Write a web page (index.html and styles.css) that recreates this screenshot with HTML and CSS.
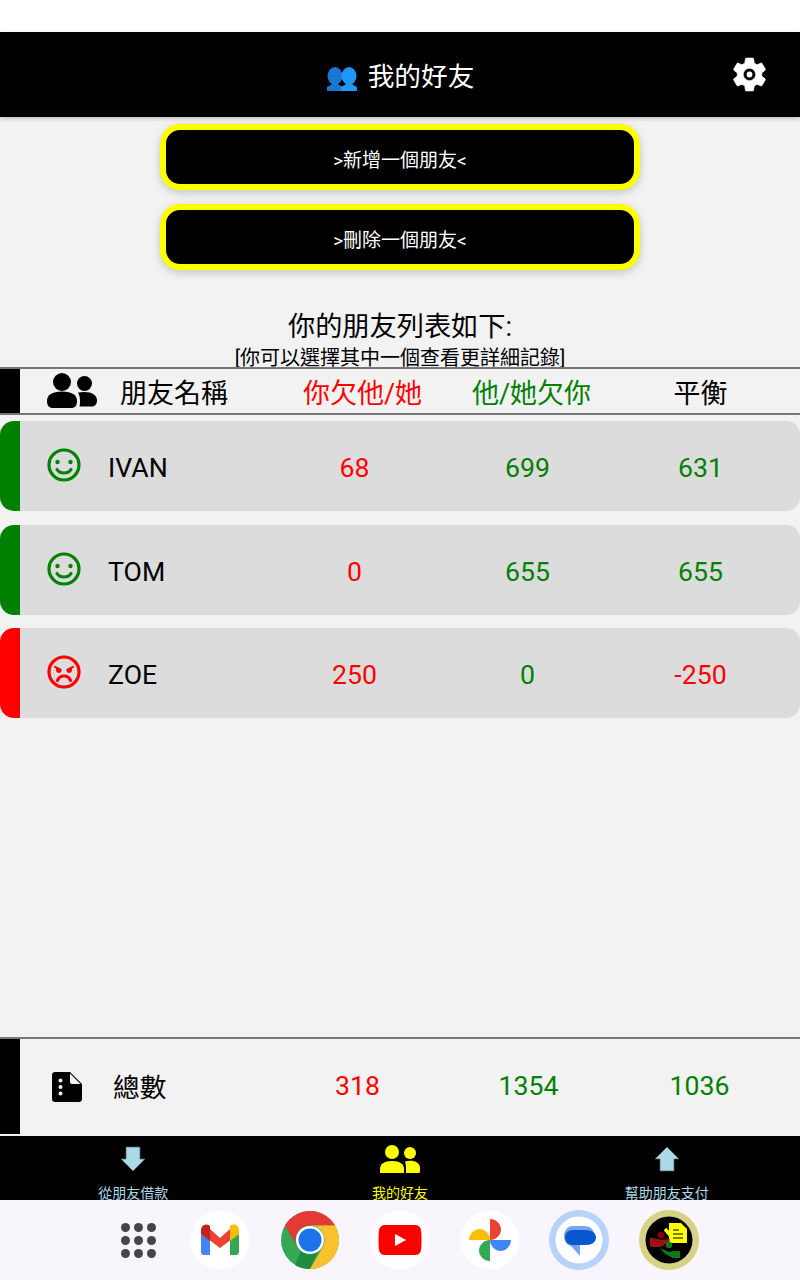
FILE: index.html
```html
<!DOCTYPE html>
<html lang="zh-Hant">
  <head>
    <meta charset="UTF-8" />
    <meta name="viewport" content="width=device-width, initial-scale=1.0" />
    <title>我的好友</title>
    <link rel="stylesheet" href="styles.css">
  </head>
  <body>
    <div class="status-bar"></div>

    <div class="top-bar">
      <div class="top-title">
        <svg class="title-icon" viewBox="0 0 30 24">
          <ellipse fill="#1976d2" cx="8" cy="9" rx="7.500" ry="9" />
          <path fill="#1976d2" d="M0 20c2-1 4-2 5-3h6c1 1 3 2 5 3v4H0z" />
          <ellipse fill="#2196f3" cx="22" cy="9" rx="7.500" ry="9" />
          <path fill="#2196f3" d="M14 20c2-1 4-2 5-3h6c1 1 3 2 5 3v4H14z" />
        </svg>
        <span>我的好友</span>
      </div>
      <svg class="settings-icon" viewBox="0 0 24 24">
        <path fill="#fff" stroke="#fff" stroke-width=".4" stroke-linejoin="round" d="M19.140 12.940c.04-.3.06-.61.06-.94 0-.32-.02-.64-.07-.94l2.030-1.580c.18-.14.23-.41.12-.61l-1.920-3.320c-.12-.22-.37-.29-.59-.22l-2.390.96c-.5-.38-1.030-.7-1.620-.94l-.36-2.540c-.04-.24-.24-.41-.48-.41h-3.840c-.24 0-.43.17-.47.41l-.36 2.540c-.59.24-1.130.57-1.620.94l-2.390-.96c-.22-.08-.47 0-.59.22L2.740 8.870c-.12.21-.08.47.12.61l2.030 1.580c-.05.3-.09.63-.09.94s.02.64.07.94l-2.030 1.580c-.18.14-.23.41-.12.61l1.920 3.320c.12.22.37.29.59.22l2.390-.96c.5.38 1.030.7 1.620.94l.36 2.540c.05.24.24.41.48.41h3.840c.24 0 .44-.17.47-.41l.36-2.540c.59-.24 1.130-.56 1.620-.94l2.390.96c.22.08.47 0 .59-.22l1.920-3.320c.12-.22.07-.47-.12-.61l-2.010-1.580zM12 15.600c-1.980 0-3.600-1.620-3.600-3.600s1.620-3.600 3.600-3.600 3.600 1.620 3.600 3.600-1.620 3.600-3.600 3.600z" />
        <circle fill="#fff" cx="12" cy="12" r="1.700" />
      </svg>
    </div>

    <div class="content">
      <div class="action-buttons">
        <button class="action-button">&gt;新增一個朋友&lt;</button>
        <button class="action-button">&gt;刪除一個朋友&lt;</button>
      </div>

      <div class="list-title">
        <h1>你的朋友列表如下:</h1>
        <p>[你可以選擇其中一個查看更詳細記錄]</p>
      </div>

      <div class="table-head">
        <div class="side-block"></div>
        <svg class="people-icon" viewBox="0 0 50 35">
          <circle cx="15" cy="9" r="9" />
          <path d="M0 28c0-6 5-9.500 15-9.500s15 3.500 15 9.500c0 4.500-2 7-6 7H6c-4 0-6-2.500-6-7z" />
          <circle cx="37.500" cy="10.500" r="7.500" />
          <path d="M31 19.500c2-.3 4-.5 6.500-.5 7.500 0 12.500 3 12.500 8.500 0 3.500-2 6-5 6H32.500c.5-2 .5-3.500.5-5.500 0-3-.5-6-2-8.500z" />
        </svg>
        <div class="head-name">朋友名稱</div>
        <div class="head-values">
          <span class="text-red">你欠他/她</span>
          <span class="text-green">他/她欠你</span>
          <span>平衡</span>
        </div>
      </div>

      <div class="friend-list">
        <div class="friend-row friend-good">
          <svg class="face-icon" viewBox="0 0 34 34">
            <circle class="face-line" cx="17" cy="17" r="15" />
            <circle class="face-dot" cx="10.500" cy="14" r="2.200" />
            <circle class="face-dot" cx="23.500" cy="14" r="2.200" />
            <path class="face-line" d="M10 21.500c1.500 2.500 4 3.500 7 3.500s5.500-1 7-3.500" />
          </svg>
          <div class="friend-name">IVAN</div>
          <div class="text-red">68</div>
          <div class="text-green">699</div>
          <div class="text-green">631</div>
        </div>
        <div class="friend-row friend-good">
          <svg class="face-icon" viewBox="0 0 34 34">
            <circle class="face-line" cx="17" cy="17" r="15" />
            <circle class="face-dot" cx="10.500" cy="14" r="2.200" />
            <circle class="face-dot" cx="23.500" cy="14" r="2.200" />
            <path class="face-line" d="M10 21.500c1.500 2.500 4 3.500 7 3.500s5.500-1 7-3.500" />
          </svg>
          <div class="friend-name">TOM</div>
          <div class="text-red">0</div>
          <div class="text-green">655</div>
          <div class="text-green">655</div>
        </div>
        <div class="friend-row friend-bad">
          <svg class="face-icon" viewBox="0 0 34 34">
            <circle class="face-line" cx="17" cy="17" r="15" />
            <path class="face-dot" d="M7.500 10.500l7 3.500v1.500c0 1.500-1 2.500-2.500 2.500s-3-1.200-3-3v-1.500l-2-1zM26.500 10.500l-7 3.500v1.500c0 1.500 1 2.500 2.500 2.500s3-1.200 3-3v-1.500l2-1z" />
            <path class="face-line" d="M10.500 25.500c1-3 3.500-4.500 6.500-4.500s5.500 1.500 6.500 4.500" />
          </svg>
          <div class="friend-name">ZOE</div>
          <div class="text-red">250</div>
          <div class="text-green">0</div>
          <div class="text-red">-250</div>
        </div>
      </div>

      <div class="total-row">
        <div class="side-block"></div>
        <svg class="total-icon" viewBox="0 0 30 30">
          <path d="M3 0h15l12 12v15c0 1.700-1.300 3-3 3H3c-1.700 0-3-1.300-3-3V3c0-1.700 1.300-3 3-3z" />
          <path fill="#f2f2f2" d="M18 1.500L28.500 12H20c-1.100 0-2-.9-2-2z" />
          <circle fill="#f2f2f2" cx="8.500" cy="8.500" r="2" />
          <circle fill="#f2f2f2" cx="8.500" cy="15" r="2" />
          <circle fill="#f2f2f2" cx="8.500" cy="21.500" r="2" />
        </svg>
        <div class="total-name">總數</div>
        <div class="total-values">
          <span class="text-red">318</span>
          <span class="text-green">1354</span>
          <span class="text-green">1036</span>
        </div>
      </div>
    </div>

    <div class="bottom-nav">
      <div class="nav-tab">
        <svg class="nav-icon" viewBox="0 0 40 28">
          <path fill="#add8e6" stroke="#49606a" stroke-width=".7" d="M13 2h14v12h5L20 26 8 14h5z" />
        </svg>
        <span>從朋友借款</span>
      </div>
      <div class="nav-tab nav-active">
        <svg class="nav-icon" viewBox="0 0 40 28">
          <circle fill="#ff0" cx="12" cy="7" r="7" />
          <path fill="#ff0" d="M0 24c0-5 4-8 12-8s12 3 12 8v4H0z" />
          <circle fill="#ff0" cx="30" cy="8" r="6" />
          <path fill="#ff0" d="M25 16.500c1.500-.5 3.500-.7 5-.7 6 0 10 2.700 10 7.200v3.500c0 .8-.5 1.500-1.500 1.500H26v-4c0-3-.3-5.500-1-7.500z" />
        </svg>
        <span>我的好友</span>
      </div>
      <div class="nav-tab">
        <svg class="nav-icon" viewBox="0 0 40 28">
          <path fill="#add8e6" stroke="#49606a" stroke-width=".7" d="M13 26h14V14h5L20 2 8 14h5z" />
        </svg>
        <span>幫助朋友支付</span>
      </div>
    </div>

    <div class="dock">
      <div class="dock-grid">
        <i></i><i></i><i></i><i></i><i></i><i></i><i></i><i></i><i></i>
      </div>

      <svg class="dock-app" viewBox="0 0 60 60">
        <circle fill="#fff" cx="30" cy="30" r="29.500" />
        <path fill="#4285f4" d="M11 24v18c0 1.700 1.300 3 3 3h6V29z" />
        <path fill="#34a853" d="M49 24v18c0 1.700-1.300 3-3 3h-6V29z" />
        <path fill="#ea4335" d="M20 19l10 9 10-9v11.500L30 38l-10-7.500z" />
        <path fill="#c5221f" d="M11 24v-4c0-4.500 5-7 8.500-4.500l.5.4V31z" />
        <path fill="#fbbc04" d="M40 15.900l.5-.4C44 13 49 15.500 49 20v4l-9 7z" />
      </svg>

      <svg class="dock-app" viewBox="0 0 60 60">
        <circle fill="#34a853" cx="30" cy="30" r="29" />
        <path fill="#1e8e3e" d="M30 59c-6 0-11-1.500-15-4l8-20 7 5 8 2z" />
        <path fill="#e53935" d="M4.900 15.500A29 29 0 0 1 55.100 15.500H30A14.500 14.500 0 0 0 17.400 37.250z" />
        <path fill="#fbc02d" d="M55.100 15.500A29 29 0 0 1 30 59L42.600 37.250A14.500 14.500 0 0 0 30 15.500z" />
        <circle fill="#fff" cx="30" cy="30" r="14" />
        <circle fill="#1a73e8" cx="30" cy="30" r="11.500" />
      </svg>

      <svg class="dock-app" viewBox="0 0 60 60">
        <circle fill="#fff" cx="30" cy="30" r="29.500" />
        <path fill="#f00" d="M15 15h30c3.500 0 5.500 2 6 5 .7 6 .7 14 0 20-.5 3-2.500 5-6 5H15c-3.500 0-5.500-2-6-5-.7-6-.7-14 0-20 .5-3 2.500-5 6-5z" />
        <path fill="#fff" d="M25 24v12l11-6z" />
      </svg>

      <svg class="dock-app" viewBox="0 0 60 60">
        <circle fill="#fff" cx="30" cy="30" r="29.500" />
        <path fill="#ea4335" d="M30 9c6 0 11 5 11 10.500S36 30 30 30z" />
        <path fill="#4285f4" d="M51 30c0 6-5 11-10.500 11S30 36 30 30z" />
        <path fill="#34a853" d="M30 51c-6 0-11-5-11-10.500S24 30 30 30z" />
        <path fill="#fbbc04" d="M9 30c0-6 5-11 10.500-11S30 24 30 30z" />
      </svg>

      <svg class="dock-app dock-app-near" viewBox="0 0 60 60">
        <circle fill="#b8d3fb" cx="30" cy="30" r="30" />
        <circle fill="#fff" cx="30" cy="30" r="23.500" />
        <path fill="#7ba3f1" d="M24 16h11c6 0 10 3.500 10 8 0 5-5 8-10 8h-4v14l-9-10c-4-1-7-5-7-10 0-6 4-10 9-10z" />
        <path fill="#0b57d0" d="M24 20h13c6 0 10 3 10 7.500S43 35 37 35H24c-5 0-8-3-8-7.500S19 20 24 20z" />
      </svg>

      <svg class="dock-app" viewBox="0 0 60 60">
        <circle fill="#d6d388" cx="30" cy="30" r="30" />
        <circle fill="#000" cx="30" cy="30" r="23.500" />
        <path fill="#ff0" d="M30 13h12l6 6v14H30z" />
        <path stroke="#000" stroke-width="1.200" d="M34 20h6M34 24h10M34 28h10" />
        <path stroke="#ff0" stroke-width="3.500" d="M26 19l6 7" />
        <circle fill="#8b0000" cx="22" cy="25" r="3.300" />
        <path fill="#a01010" d="M11 28h3l9 2 7-1c1 0 1 2 0 3l-8 5H14l-3-1z" />
        <circle fill="#0a7a1a" cx="30" cy="35" r="3.200" />
        <path fill="#0a7a1a" d="M21 38l9 4 6-1h5v7h-7l-8-4z" />
      </svg>
    </div>
  </body>
</html>
```

FILE: styles.css
```css
* {
  margin: 0;
  padding: 0;
  box-sizing: border-box;
}

body {
  font-family: Roboto, "Noto Sans CJK TC", sans-serif;
  background-color: #f2f2f2;
  color: #000;
  width: 800px;
  height: 1280px;
  overflow: hidden;
  display: flex;
  flex-direction: column;
}

.text-red {
  color: #f00;
}

.text-green {
  color: #008000;
}

.status-bar {
  height: 32px;
  background-color: #fff;
}

.top-bar {
  height: 85px;
  background-color: #000;
  color: #fff;
  display: flex;
  align-items: center;
  justify-content: center;
  box-shadow: 0 2px 4px rgba(0, 0, 0, 0.2);
  position: relative;
  z-index: 1;
}

.top-title {
  display: flex;
  align-items: center;
  gap: 11px;
  padding-left: 1px;
  font-size: 26.670px;
}

.title-icon {
  width: 30px;
  height: 24px;
  margin-top: 9px;
}

.settings-icon {
  width: 41px;
  height: 41px;
  position: absolute;
  right: 30.500px;
  top: 21.500px;
}

.content {
  flex: 1;
  display: flex;
  flex-direction: column;
}

.action-buttons {
  display: flex;
  flex-direction: column;
  align-items: center;
  gap: 14px;
  padding-top: 7px;
}

.action-button {
  width: 480px;
  height: 66px;
  padding-top: 2px;
  background-color: #000;
  color: #fff;
  border: 6px solid #ff0;
  border-radius: 20px;
  box-shadow: 0 3px 9px rgba(0, 0, 0, 0.18);
  font-family: inherit;
  font-size: 19px;
}

.list-title {
  height: 97px;
  padding-top: 39px;
  text-align: center;
}

.list-title h1 {
  font-size: 27.200px;
  font-weight: normal;
  line-height: 36px;
}

.list-title p {
  font-size: 20px;
  line-height: 24px;
  margin-top: 1px;
}

.table-head {
  height: 48px;
  border-top: 2px solid #777;
  border-bottom: 2px solid #777;
  display: flex;
  align-items: center;
}

.side-block {
  width: 20px;
  height: 100%;
  background-color: #000;
}

.people-icon {
  width: 50px;
  height: 35px;
  margin-left: 27px;
  margin-top: -1px;
}

.head-name {
  width: 158px;
  margin-left: 23px;
  font-size: 27px;
}

.head-values {
  flex: 1;
  display: grid;
  grid-template-columns: 169px 169px 169px;
  text-align: center;
  font-size: 27px;
}

.friend-list {
  flex: 1;
  display: flex;
  flex-direction: column;
  gap: 13.500px;
  padding-top: 6px;
}

.friend-row {
  height: 90px;
  border-left: 20px solid;
  border-radius: 14px;
  background-color: #dcdcdc;
  display: grid;
  grid-template-columns: 88px 160px 173px 173px 173px;
  align-items: center;
  text-align: center;
  font-size: 26.670px;
  padding-top: 4px;
}

.friend-good {
  border-left-color: #008000;
}

.friend-bad {
  border-left-color: #f00;
}

.friend-name {
  text-align: left;
}

.face-icon {
  width: 34px;
  height: 34px;
  margin-left: 27px;
  margin-top: -6px;
}

.face-line {
  fill: none;
  stroke-width: 3.200px;
  stroke-linecap: round;
}

.friend-good .face-line {
  stroke: #008000;
}

.friend-good .face-dot {
  fill: #008000;
}

.friend-bad .face-line {
  stroke: #f00;
}

.friend-bad .face-dot {
  fill: #f00;
}

.total-row {
  height: 97px;
  margin-bottom: 2px;
  border-top: 2px solid #777;
  display: flex;
  align-items: center;
  font-size: 26.670px;
}

.total-icon {
  width: 30px;
  height: 30px;
  margin-left: 32px;
}

.total-name {
  width: 159px;
  margin-left: 31px;
  margin-top: -2px;
}

.total-values {
  flex: 1;
  display: grid;
  grid-template-columns: 171px 171px 171px;
  text-align: center;
  margin-top: -2px;
}

.bottom-nav {
  height: 64px;
  background-color: #000;
  display: grid;
  grid-template-columns: repeat(3, 1fr);
  overflow: hidden;
}

.nav-tab {
  display: flex;
  flex-direction: column;
  align-items: center;
  padding-top: 9px;
  color: #add8e6;
  font-size: 14px;
  line-height: 20px;
}

.nav-active {
  color: #ff0;
}

.nav-icon {
  width: 40px;
  height: 28px;
  margin-bottom: 10px;
}

.dock {
  height: 80px;
  background-color: #f8f5fd;
  padding-left: 108px;
  display: flex;
  align-items: center;
}

.dock-grid {
  width: 60px;
  margin-right: 22px;
  display: grid;
  grid-template-columns: repeat(3, 9px);
  justify-content: center;
  gap: 4px;
}

.dock-grid i {
  width: 9px;
  height: 9px;
  border-radius: 50%;
  background-color: #44464f;
}

.dock-app {
  width: 60px;
  height: 60px;
}

.dock-app + .dock-app {
  margin-left: 30px;
}

.dock-app + .dock-app-near {
  margin-left: 29px;
}
```
